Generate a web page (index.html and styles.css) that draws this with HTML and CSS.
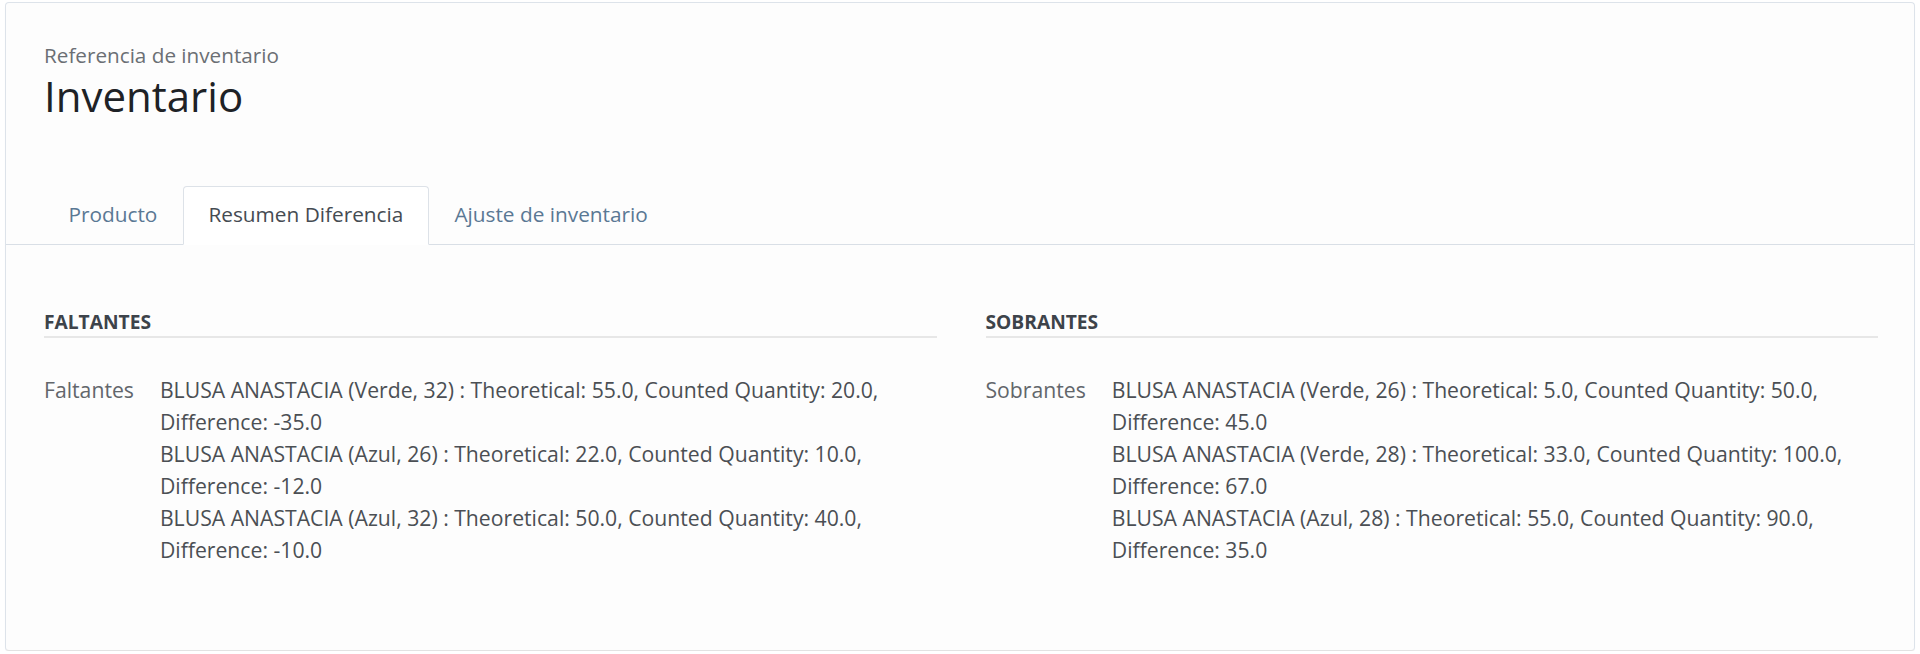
FILE: index.html
```html
<!DOCTYPE html>
<html lang="es">
<head>
<meta charset="utf-8">
<title>Inventario</title>
<link rel="stylesheet" href="styles.css">
</head>
<body>
<div class="sheet">
  <div class="sheet-head">
    <div class="ref-label">Referencia de inventario</div>
    <h1 class="title">Inventario</h1>
  </div>
  <ul class="tabs">
    <li class="tab">Producto</li>
    <li class="tab active">Resumen Diferencia</li>
    <li class="tab">Ajuste de inventario</li>
  </ul>
  <div class="pane">
    <div class="group">
      <div class="sep">FALTANTES</div>
      <div class="field">
        <div class="label">Faltantes</div>
        <div class="value">BLUSA ANASTACIA (Verde, 32) : Theoretical: 55.0, Counted Quantity: 20.0, Difference: -35.0<br>BLUSA ANASTACIA (Azul, 26) : Theoretical: 22.0, Counted Quantity: 10.0, Difference: -12.0<br>BLUSA ANASTACIA (Azul, 32) : Theoretical: 50.0, Counted Quantity: 40.0, Difference: -10.0</div>
      </div>
    </div>
    <div class="group">
      <div class="sep">SOBRANTES</div>
      <div class="field">
        <div class="label">Sobrantes</div>
        <div class="value">BLUSA ANASTACIA (Verde, 26) : Theoretical: 5.0, Counted Quantity: 50.0, Difference: 45.0<br>BLUSA ANASTACIA (Verde, 28) : Theoretical: 33.0, Counted Quantity: 100.0, Difference: 67.0<br>BLUSA ANASTACIA (Azul, 28) : Theoretical: 55.0, Counted Quantity: 90.0, Difference: 35.0</div>
      </div>
    </div>
  </div>
</div>
</body>
</html>
```

FILE: styles.css
```css
html, body {
  margin: 0;
  padding: 0;
  background: #ffffff;
}

body {
  font-family: "Open Sans", "Noto Sans", sans-serif;
  color: #4a4a4a;
  padding: 2px 5px 0 5px;
}

.sheet {
  box-sizing: border-box;
  height: 649px;
  background: #fdfdfd;
  border: 1px solid #dde3ea;
  border-bottom-color: #e2e2e2;
  border-radius: 4px;
  box-shadow: 0 1px 1px rgba(0, 0, 0, 0.04);
}

.sheet-head {
  padding: 39px 38px 0 38px;
}

.ref-label {
  font-size: 20.7px;
  line-height: 27px;
  color: #6b6f74;
}

.title {
  margin: 3px 0 0 0;
  font-size: 42px;
  line-height: 48px;
  font-weight: 400;
  color: #1e2226;
}

.tabs {
  list-style: none;
  margin: 66px 0 0 0;
  padding: 0 0 0 37px;
  display: flex;
  border-bottom: 1px solid #d9dfe6;
}

.tab {
  font-size: 20.8px;
  line-height: 31.5px;
  padding: 12px 24.5px 13px 24.5px;
  color: #5a7894;
  border: 1px solid transparent;
  border-radius: 4px 4px 0 0;
  margin-bottom: -1px;
}

.tab.active {
  color: #454b52;
  background: #ffffff;
  border-color: #dde2e8;
  border-bottom-color: #ffffff;
}

.pane {
  display: grid;
  grid-template-columns: 1fr 1fr;
  column-gap: 49px;
  padding: 65px 36px 0 38px;
}

.sep {
  font-size: 19.2px;
  line-height: 24px;
  font-weight: 700;
  color: #3d434a;
  padding-bottom: 2px;
  border-bottom: 2px solid #e7e7e7;
}

.field {
  display: flex;
  gap: 26px;
  margin-top: 36px;
  font-size: 21.2px;
  line-height: 32px;
}

.label {
  white-space: nowrap;
  color: #62666b;
}

.value {
  color: #4b4f54;
}
```
